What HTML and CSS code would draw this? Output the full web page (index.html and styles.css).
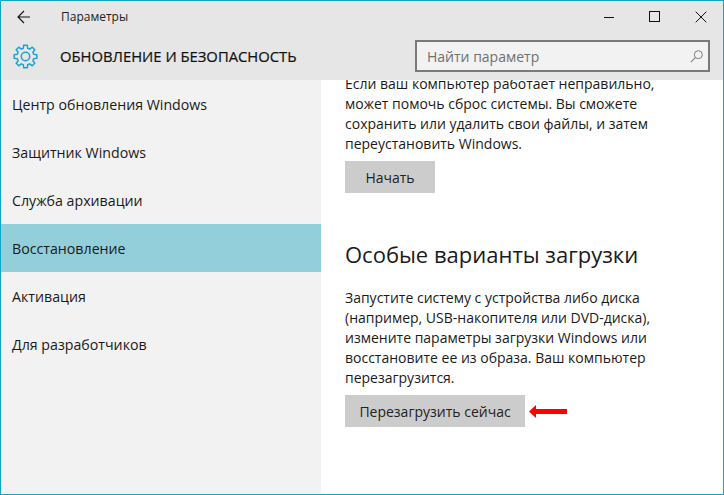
FILE: index.html
```html
<!DOCTYPE html>
<html lang="ru">
<head>
<meta charset="utf-8">
<title>Параметры</title>
<link rel="stylesheet" href="styles.css">
</head>
<body>
<div class="window">
  <header class="head">
    <div class="titlebar">
      <svg class="back" width="18" height="14" viewBox="0 0 18 14"><path d="M7 1 1 7l6 6M1 7h12" fill="none" stroke="#111" stroke-width="1.1"/></svg>
      <span class="apptitle">Параметры</span>
      <div class="controls">
        <svg width="12" height="12" viewBox="0 0 12 12"><path d="M1 6.5h10" stroke="#111" stroke-width="1"/></svg>
        <svg width="12" height="12" viewBox="0 0 12 12"><rect x=".5" y=".5" width="10" height="10" fill="none" stroke="#111" stroke-width="1"/></svg>
        <svg width="12" height="12" viewBox="0 0 12 12"><path d="M.7.7l10.6 10.6M11.3.7.7 11.3" stroke="#111" stroke-width="1"/></svg>
      </div>
    </div>
    <div class="pagebar">
      <svg class="gear" width="25" height="25" viewBox="0 0 25 25"><g fill="none" stroke="#1ba4cf" stroke-width="1.5" stroke-linejoin="round"><polygon points="10.7,1.14 14.3,1.14 14.7,4.29 16.75,5.14 19.26,3.2 21.8,5.74 19.86,8.25 20.71,10.3 23.86,10.7 23.86,14.3 20.71,14.7 19.86,16.75 21.8,19.26 19.26,21.8 16.75,19.86 14.7,20.71 14.3,23.86 10.7,23.86 10.3,20.71 8.25,19.86 5.74,21.8 3.2,19.26 5.14,16.75 4.29,14.7 1.14,14.3 1.14,10.7 4.29,10.3 5.14,8.25 3.2,5.74 5.74,3.2 8.25,5.14 10.3,4.29"/><circle cx="12.5" cy="12.5" r="4.2"/></g></svg>
      <h1 class="pagetitle">ОБНОВЛЕНИЕ И БЕЗОПАСНОСТЬ</h1>
      <div class="search">
        <span class="placeholder">Найти параметр</span>
        <svg width="13" height="13" viewBox="0 0 13 13"><circle cx="8.3" cy="4.7" r="4" fill="none" stroke="#7f7f7f" stroke-width="1"/><path d="M5.3 7.7.8 12.2" stroke="#7f7f7f" stroke-width="1.1"/></svg>
      </div>
    </div>
  </header>
  <div class="body">
    <nav class="side">
      <a class="item">Центр обновления Windows</a>
      <a class="item">Защитник Windows</a>
      <a class="item">Служба архивации</a>
      <a class="item active">Восстановление</a>
      <a class="item">Активация</a>
      <a class="item">Для разработчиков</a>
    </nav>
    <main class="content">
      <p class="para">Если ваш компьютер работает неправильно, может помочь сброс системы. Вы сможете сохранить или удалить свои файлы, и затем переустановить Windows.</p>
      <button class="btn start">Начать</button>
      <h2 class="section">Особые варианты загрузки</h2>
      <p class="para">Запустите систему с устройства либо диска (например, USB-накопителя или DVD-диска), измените параметры загрузки Windows или восстановите ее из образа. Ваш компьютер перезагрузится.</p>
      <div class="action">
        <button class="btn restart">Перезагрузить сейчас</button>
        <svg class="arrow" width="38" height="13" viewBox="0 0 38 13"><path d="M0 6.5 7 0v4h31v5H7v4z" fill="#f00"/></svg>
      </div>
    </main>
  </div>
</div>
</body>
</html>
```
FILE: styles.css
```css
* { box-sizing: border-box; }
html, body { margin: 0; height: 100%; }
body { font-family: "Open Sans", "Noto Sans", sans-serif; color: #1a1a1a; overflow: hidden; }
.window { width: 724px; height: 495px; border: 1px solid #12a5c8; display: flex; flex-direction: column; background: #fff; }
.head { background: #e6e6e6; height: 79px; flex: none; }
.titlebar { height: 31px; display: flex; align-items: center; padding-left: 16px; }
.apptitle { font-size: 12px; margin-left: 26px; color: #222; }
.controls { margin-left: auto; display: flex; align-items: center; gap: 34px; padding-right: 16px; }
.pagebar { height: 48px; display: flex; align-items: center; padding-left: 12px; padding-right: 13px; }
.gear { flex: none; }
.pagetitle { font-size: 14.8px; font-weight: 400; margin: 0 0 0 22px; color: #111; -webkit-text-stroke: .2px #111; }
.search { margin-left: auto; width: 295px; height: 32px; background: #f2f2f2; border: 2px solid #7a7a7a; display: flex; align-items: center; justify-content: space-between; padding: 0 5px 0 10px; }
.placeholder { font-size: 14px; color: #707070; }
.body { flex: 1; display: flex; min-height: 0; }
.side { width: 320px; flex: none; background: #f2f2f2; display: flex; flex-direction: column; }
.item { height: 48px; display: flex; align-items: center; padding-left: 11px; font-size: 14.2px; color: #1a1a1a; }
.active { background: #93cedb; }
.content { flex: 1; padding-left: 24px; overflow: hidden; }
.para { margin: -6px 0 0; width: 340px; font-size: 14px; line-height: 20px; color: #1a1a1a; }
.btn { font: inherit; font-size: 14px; border: 0; background: #cccccc; color: #222; height: 32px; padding: 0 14px; display: block; }
.start { width: 90px; margin-top: 7px; }
.restart { width: 180px; padding: 0; }
.section { font-size: 22px; font-weight: 400; margin: 46px 0 25px; line-height: 30px; color: #1a1a1a; }
.action { display: flex; align-items: center; gap: 4px; margin-top: 7px; }
.arrow { flex: none; }
```
